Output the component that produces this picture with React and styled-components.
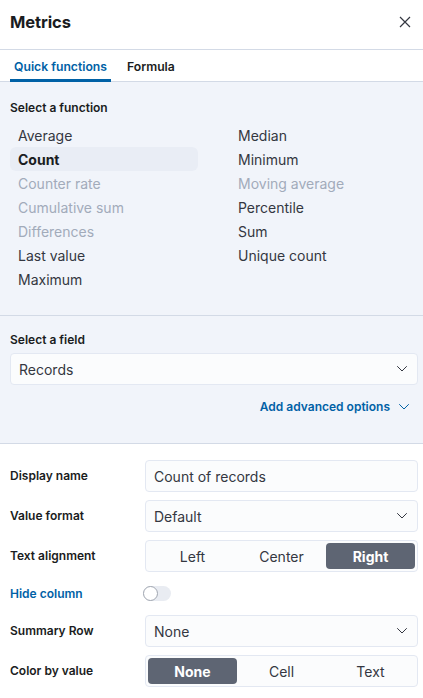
import React, { useState } from 'react';
import styled, { createGlobalStyle } from 'styled-components';

const GlobalStyle = createGlobalStyle`
    html, body {
        margin: 0;
        padding: 0;
        background: #ffffff;
    }
    body {
        font-family: 'Inter', 'Noto Sans', sans-serif;
        color: #343741;
        -webkit-font-smoothing: antialiased;
    }
`

const Flyout = styled.div`
    width: 423px;
    height: 698px;
    overflow: hidden;
    background: #ffffff;
`

const Header = styled.div`
    height: 50px;
    box-sizing: border-box;
    border-bottom: 1px solid #d3dae6;
    display: flex;
    align-items: center;
    justify-content: space-between;
    padding: 0 12px 6px 10px;
`

const Title = styled.h2`
    margin: 0;
    font-size: 16.5px;
    font-weight: 700;
    color: #1a1c21;
    letter-spacing: -0.1px;
`

const CloseButton = styled.button`
    border: none;
    background: none;
    padding: 0;
    width: 12px;
    height: 12px;
    display: flex;
    cursor: pointer;
`

const Tabs = styled.div`
    height: 32px;
    box-sizing: border-box;
    border-bottom: 1px solid #d3dae6;
    display: flex;
    gap: 12px;
    padding: 0 10px;
`

const Tab = styled.button`
    border: none;
    background: none;
    padding: 4px 4px 0;
    margin-bottom: -1px;
    font-family: inherit;
    font-size: 12.2px;
    font-weight: 600;
    color: ${p => (p.$active ? '#0061a6' : '#1a1c21')};
    border-bottom: 3px solid ${p => (p.$active ? '#0061a6' : 'transparent')};
    cursor: pointer;
`

const Panel = styled.div`
    background: #f1f4fa;
    border-bottom: 1px solid #d3dae6;
    padding: ${p => p.$pad || '17px 10px 24px'};
`

const Label = styled.div`
    font-size: 12px;
    font-weight: 600;
    color: ${p => (p.$link ? '#0061a6' : '#1a1c21')};
    line-height: 18px;
`

const FunctionGrid = styled.div`
    display: grid;
    grid-template-columns: 188px 188px;
    grid-auto-flow: column;
    grid-template-rows: repeat(7, 24px);
    column-gap: 32px;
    margin-top: 6px;
`

const FunctionItem = styled.div`
    display: flex;
    align-items: center;
    padding: 0 8px;
    border-radius: 6px;
    font-size: 14px;
    font-weight: ${p => (p.$selected ? 700 : 400)};
    color: ${p => (p.$disabled ? '#a2abba' : p.$selected ? '#1a1c21' : '#343741')};
    background: ${p => (p.$selected ? '#e9edf5' : 'transparent')};
`

const Field = styled.div`
    height: 32px;
    box-sizing: border-box;
    width: ${p => p.$width || '100%'};
    border: 1px solid #e3e8f2;
    border-radius: 4px;
    background: #fbfcfd;
    display: flex;
    align-items: center;
    justify-content: space-between;
    padding: 0 10px 0 8px;
    font-size: 14px;
    color: #343741;
    margin-top: ${p => p.$mt || '0'};
`

const AdvancedLink = styled.div`
    display: flex;
    justify-content: flex-end;
    align-items: center;
    gap: 9px;
    margin-top: 14px;
    padding-right: 9px;
    font-size: 12px;
    font-weight: 600;
    color: #0061a6;
    line-height: 16px;
`

const Settings = styled.div`
    padding: 16px 5px 0 10px;
    display: flex;
    flex-direction: column;
    gap: 8px;
`

const Row = styled.div`
    display: grid;
    grid-template-columns: 135px 273px;
    align-items: center;
    min-height: ${p => p.$h || '32px'};
`

const ButtonGroup = styled.div`
    height: 32px;
    box-sizing: border-box;
    border: 1px solid #e3e8f2;
    border-radius: 4px;
    background: #fbfcfd;
    padding: 2px;
    display: grid;
    grid-template-columns: repeat(3, 1fr);
`

const GroupButton = styled.button`
    border: none;
    border-radius: 4px;
    font-family: inherit;
    font-size: 14px;
    font-weight: ${p => (p.$active ? 700 : 400)};
    color: ${p => (p.$active ? '#ffffff' : '#343741')};
    background: ${p => (p.$active ? '#5e6573' : 'transparent')};
    cursor: pointer;
`

const Toggle = styled.div`
    width: 28px;
    height: 15px;
    border-radius: 8px;
    background: #e9ecf2;
    position: relative;
    margin-left: -2px;
`

const Knob = styled.div`
    position: absolute;
    left: 0;
    top: 0;
    width: 15px;
    height: 15px;
    box-sizing: border-box;
    border-radius: 50%;
    background: #ffffff;
    border: 1px solid #a0a6b0;
`

const Chevron = ({ color = '#343741' }) => (
    <svg width="10" height="6" viewBox="0 0 10 6" fill="none">
        <path d="M0.5 0.5 L5 5 L9.5 0.5" stroke={color} strokeWidth="1" strokeLinecap="round" />
    </svg>
)

const leftFns = [
    { name: 'Average' },
    { name: 'Count', selected: true },
    { name: 'Counter rate', disabled: true },
    { name: 'Cumulative sum', disabled: true },
    { name: 'Differences', disabled: true },
    { name: 'Last value' },
    { name: 'Maximum' },
]

const rightFns = [
    { name: 'Median' },
    { name: 'Minimum' },
    { name: 'Moving average', disabled: true },
    { name: 'Percentile' },
    { name: 'Sum' },
    { name: 'Unique count' },
]

const Segmented = ({ options, value }) => (
    <ButtonGroup>
        {options.map(o => (
            <GroupButton key={o} $active={o === value}>{o}</GroupButton>
        ))}
    </ButtonGroup>
)

const App = () => {
    const [tab, setTab] = useState('quick');

    return (
        <>
            <GlobalStyle />
            <Flyout>
                <Header>
                    <Title>Metrics</Title>
                    <CloseButton aria-label="Close">
                        <svg width="12" height="12" viewBox="0 0 12 12">
                            <path d="M1 1 L11 11 M11 1 L1 11" stroke="#343741" strokeWidth="1.2" />
                        </svg>
                    </CloseButton>
                </Header>
                <Tabs>
                    <Tab $active={tab === 'quick'} onClick={() => setTab('quick')}>Quick functions</Tab>
                    <Tab $active={tab === 'formula'} onClick={() => setTab('formula')}>Formula</Tab>
                </Tabs>

                <Panel>
                    <Label>Select a function</Label>
                    <FunctionGrid>
                        {leftFns.map(f => (
                            <FunctionItem key={f.name} $selected={f.selected} $disabled={f.disabled}>{f.name}</FunctionItem>
                        ))}
                        {rightFns.map(f => (
                            <FunctionItem key={f.name} $selected={f.selected} $disabled={f.disabled}>{f.name}</FunctionItem>
                        ))}
                    </FunctionGrid>
                </Panel>

                <Panel $pad="15px 5px 28px 10px">
                    <Label>Select a field</Label>
                    <Field $mt="4px">
                        Records
                        <Chevron />
                    </Field>
                    <AdvancedLink>
                        Add advanced options
                        <Chevron color="#0061a6" />
                    </AdvancedLink>
                </Panel>

                <Settings>
                    <Row>
                        <Label>Display name</Label>
                        <Field>Count of records</Field>
                    </Row>
                    <Row>
                        <Label>Value format</Label>
                        <Field>Default<Chevron /></Field>
                    </Row>
                    <Row>
                        <Label>Text alignment</Label>
                        <Segmented options={['Left', 'Center', 'Right']} value="Right" />
                    </Row>
                    <Row $h="27px">
                        <Label $link>Hide column</Label>
                        <Toggle><Knob /></Toggle>
                    </Row>
                    <Row>
                        <Label>Summary Row</Label>
                        <Field>None<Chevron /></Field>
                    </Row>
                    <Row>
                        <Label>Color by value</Label>
                        <Segmented options={['None', 'Cell', 'Text']} value="None" />
                    </Row>
                </Settings>
            </Flyout>
        </>
    )
}

export default App;
